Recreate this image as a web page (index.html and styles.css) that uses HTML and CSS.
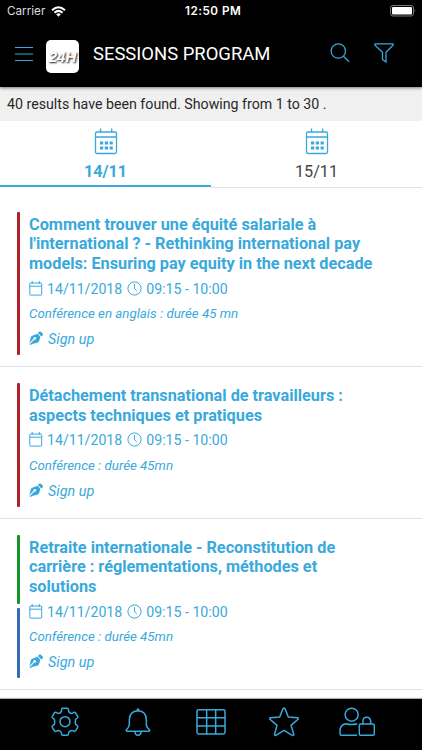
FILE: index.html
```html
<!DOCTYPE html>
<html lang="fr">
  <head>
    <meta charset="utf-8" />
    <title>Sessions program</title>
    <link rel="stylesheet" href="styles.css">
  </head>
  <body>
    <svg class="defs" width="0" height="0">
      <symbol id="calendar" viewBox="0 0 24 27">
        <path d="M6.500 .5v4M17.700 .5v4M3 4h18q1.500 0 1.500 1.500v18.500q0 1.500-1.500 1.500H3q-1.500 0-1.500-1.500V5.500q0-1.500 1.500-1.500zM1.500 9H22.500" />
        <path class="dots" d="M6 13.500h3.200v3H6zM10.800 13.500h3.200v3h-3.200zM15.600 13.500h3.200v3h-3.200zM6 18.500h3.200v3H6zM10.800 18.500h3.200v3h-3.200zM15.600 18.500h3.200v3h-3.200z" />
      </symbol>
      <symbol id="date" viewBox="0 0 14 15">
        <path d="M1.500 2h10.500q.7 0 .7.700v10.700q0 .7-.7.700H1.500q-.7 0-.7-.7V2.700q0-.7.7-.7zM.8 5.200h12M3.200 0v3M10.300 0v3" />
      </symbol>
      <symbol id="clock" viewBox="0 0 15 15">
        <circle cx="7.500" cy="7.500" r="6.600" />
        <path d="M7.500 3.300v4.500l2.200 1.900" />
      </symbol>
      <symbol id="pen" viewBox="0 0 44 44">
        <path d="M2 42L17 27A4 4 0 1 0 14 24L0 39Q4 31 5 22Q5 17 10 15L27 9L36 19L31 33Q29 37 23 38Q12 39 4 44z" />
        <path d="M28 6L32 2Q34 0 37 2L43 8Q45 11 43 13L39 17z" />
      </symbol>
    </svg>

    <header>
      <div class="status">
        <span class="carrier">Carrier</span>
        <svg class="wifi" width="15" height="11" viewBox="0 0 15 11">
          <path d="M1 4.300Q7.500-1.800 14 4.300M3.400 6.800Q7.500 3 11.600 6.800" />
          <path class="fill" d="M5.200 8.300Q7.500 6.400 9.800 8.300L7.500 10.800z" />
        </svg>
        <span class="clock">12:50 PM</span>
        <svg class="battery" width="27" height="12" viewBox="0 0 27 12">
          <rect class="case" x=".5" y=".5" width="23" height="10.500" rx="2.500" />
          <rect class="level" x="2" y="2" width="20" height="7.500" rx="1" />
          <path class="cap" d="M24.700 4q1.500 1.800 0 3.600z" />
        </svg>
      </div>
      <div class="toolbar">
        <svg class="menu" width="18" height="16" viewBox="0 0 18 16">
          <path d="M0 1.500h18M0 8h18M0 14.500h18" />
        </svg>
        <div class="logo"><span>24H</span></div>
        <h1>SESSIONS PROGRAM</h1>
        <svg class="search" width="20" height="20" viewBox="0 0 20 20">
          <circle cx="8.300" cy="8" r="7.200" />
          <path d="M13.500 13.300L19 18.700" />
        </svg>
        <svg class="filter" width="20" height="20" viewBox="0 0 20 20">
          <path d="M1 .8h18v1.400L12 9.200V19L8.500 16.500V9.200L1 2.200z" />
        </svg>
      </div>
    </header>

    <p class="results">40 results have been found. Showing from 1 to 30 .</p>

    <nav class="tabs">
      <a class="tab active"><svg width="24" height="27"><use href="#calendar" /></svg><span>14/11</span></a>
      <a class="tab"><svg width="24" height="27"><use href="#calendar" /></svg><span>15/11</span></a>
    </nav>

    <main>
      <article class="session first">
        <div class="tracks"><i class="red"></i></div>
        <div class="content">
          <h2>Comment trouver une équité salariale à<br>l'international ? - Rethinking international pay<br>models: Ensuring pay equity in the next decade</h2>
          <p class="time">
            <svg width="14" height="15"><use href="#date" /></svg><span class="day">14/11/2018</span>
            <svg width="15" height="15"><use href="#clock" /></svg><span class="hours">09:15 - 10:00</span>
          </p>
          <p class="type">Conférence en anglais : durée 45 mn</p>
          <p class="signup"><svg width="14" height="14"><use href="#pen" /></svg><span>Sign up</span></p>
        </div>
      </article>
      <article class="session">
        <div class="tracks"><i class="red"></i></div>
        <div class="content">
          <h2>Détachement transnational de travailleurs :<br>aspects techniques et pratiques</h2>
          <p class="time">
            <svg width="14" height="15"><use href="#date" /></svg><span class="day">14/11/2018</span>
            <svg width="15" height="15"><use href="#clock" /></svg><span class="hours">09:15 - 10:00</span>
          </p>
          <p class="type">Conférence : durée 45mn</p>
          <p class="signup"><svg width="14" height="14"><use href="#pen" /></svg><span>Sign up</span></p>
        </div>
      </article>
      <article class="session">
        <div class="tracks"><i class="green"></i><i class="blue"></i></div>
        <div class="content">
          <h2>Retraite internationale - Reconstitution de<br>carrière : réglementations, méthodes et<br>solutions</h2>
          <p class="time">
            <svg width="14" height="15"><use href="#date" /></svg><span class="day">14/11/2018</span>
            <svg width="15" height="15"><use href="#clock" /></svg><span class="hours">09:15 - 10:00</span>
          </p>
          <p class="type">Conférence : durée 45mn</p>
          <p class="signup"><svg width="14" height="14"><use href="#pen" /></svg><span>Sign up</span></p>
        </div>
      </article>
    </main>

    <footer>
      <a><svg width="30" height="30" viewBox="150 66 90 90">
        <path d="M188 70h14q3 0 3 3l1 6q1 3 4 5l3 1q3 1 5-1l4-2q3-1 5 2l6 10q2 3-1 5l-4 3q-2 2-2 5v7q0 3 2 5l4 3q3 2 1 5l-6 10q-2 3-5 2l-4-2q-2-1-5 0l-3 2q-3 1-4 4l-1 5q0 3-3 3h-14q-3 0-3-3l-1-5q-1-3-4-5l-3-1q-3-1-5 0l-4 2q-3 1-5-2l-6-10q-2-3 1-5l4-3q2-2 2-5v-7q0-3-2-5l-4-3q-3-2-1-5l6-10q2-3 5-2l4 2q2 2 5 1l3-1q3-2 4-5l1-6q0-3 3-3z" />
        <circle cx="195" cy="110" r="15" />
      </svg></a>
      <a><svg width="30" height="30" viewBox="369 66 90 90">
        <path d="M383 139q-5 0-4-4 9-8 9-17V105Q388 78 414 77Q439 78 439 105v13q0 9 10 17 1 4-4 4zM405 141q1 10 9 10t9-10" />
        <path class="knob" d="M410 77v-5q4-5 8 0v5z" />
      </svg></a>
      <a><svg width="30" height="30" viewBox="588 66 90 90">
        <path d="M596 74h74q5 0 5 5v63q0 5-5 5h-74q-5 0-5-5V79q0-5 5-5zM591 98h84M591 123h84M620 74v73M647 74v73" />
      </svg></a>
      <a><svg width="30" height="30" viewBox="175 66 90 90">
        <path d="M217 71q3-4 6 0l10 25 27 2q5 1 2 5l-21 18 8 26q1 6-4 4l-25-15-24 15q-5 2-4-4l7-26-21-18q-3-4 2-5l27-2z" />
      </svg></a>
      <a><svg width="36" height="30" viewBox="389 66 108 90">
        <circle cx="427" cy="89" r="19.500" />
        <path d="M443 151h-47q-4 0-4-4v-9q0-20 18-22 17 5 34 0M454 117h36q5 0 5 5v24q0 5-5 5h-36q-4 0-4-5v-24q0-5 4-5zM461 117v-8q0-12 11-12t12 12v8" />
      </svg></a>
    </footer>
  </body>
</html>
```

FILE: styles.css
```css
* {
  box-sizing: border-box;
}

body {
  margin: 0;
  height: 750px;
  overflow: hidden;
  display: flex;
  flex-direction: column;
  background: #ffffff;
  color: #39a9dc;
  font-family: Roboto, "Liberation Sans", sans-serif;
}

h1,
h2,
p {
  margin: 0;
  font-weight: 400;
  white-space: nowrap;
}

svg {
  display: block;
  flex: none;
  fill: none;
  stroke: #39a9dc;
  stroke-width: 1.3;
}

.defs {
  position: absolute;
}

header {
  height: 87px;
  flex: none;
  background: #000000;
  color: #ffffff;
  box-shadow: 0 1px 3px rgba(0, 0, 0, 0.5);
  z-index: 1;
}

.status {
  height: 22px;
  display: grid;
  grid-template-columns: 44px 134px 80px 1fr 27px;
  align-items: center;
  padding: 0 5px 0 7px;
  font-family: Inter, sans-serif;
  font-size: 11.7px;
}

.carrier {
  color: #dddddd;
}

.wifi {
  stroke: #ffffff;
  stroke-width: 2;
}

.wifi .fill {
  fill: #ffffff;
  stroke: none;
}

.status .clock {
  font-weight: 600;
  letter-spacing: 0.5px;
  white-space: nowrap;
}

.battery {
  grid-column: 5;
}

.battery .case {
  stroke: #777777;
  stroke-width: 1;
}

.battery .level {
  fill: #ffffff;
  stroke: none;
}

.battery .cap {
  fill: #777777;
  stroke: none;
}

.toolbar {
  display: flex;
  align-items: center;
  height: 63px;
  padding: 0 28px 0 15px;
}

.menu {
  stroke-width: 1;
}

.logo {
  width: 33px;
  height: 33px;
  margin: 5px 14px 0 13px;
  border-radius: 5px;
  background: #ffffff;
  display: flex;
  align-items: center;
  justify-content: center;
  overflow: hidden;
}

.logo span {
  font: italic 700 15px "Liberation Sans", sans-serif;
  color: #ffffff;
  text-shadow: 1px 1px 2px #111111;
}

h1 {
  font-size: 18.45px;
}

.search {
  margin-left: auto;
}

.filter {
  margin-left: 24px;
}

.search,
.filter {
  margin-bottom: 2px;
}

.results {
  height: 34px;
  flex: none;
  padding-left: 7px;
  background: #f0f0f0;
  color: #292929;
  font-size: 14.2px;
  line-height: 35px;
}

.tabs {
  display: flex;
  flex: none;
  height: 67px;
}

.tab {
  flex: 1;
  display: flex;
  flex-direction: column;
  align-items: center;
  padding-top: 7px;
  border-bottom: 1px solid #e2e2e2;
  color: #444444;
  font-size: 16.2px;
  line-height: 34px;
}

.tab span {
  height: 30px;
}

.tab.active {
  border-bottom: 2px solid #39a9dc;
  height: 66px;
  color: #39a9dc;
  font-weight: 700;
}

.dots {
  fill: #39a9dc;
  stroke: none;
}

main {
  flex: 1;
  min-height: 0;
}

.session {
  display: flex;
  padding: 16px 16px 11px;
  border-bottom: 1px solid #e2e2e2;
}

.session.first {
  padding-top: 23.6px;
}

.tracks {
  width: 4px;
  margin-right: 9px;
  display: flex;
  flex-direction: column;
  gap: 4px;
}

.tracks i {
  flex: 1;
  width: 3px;
  margin-left: 1px;
  border-radius: 1px;
}

.red {
  background: #ab2328;
}

.green {
  background: #16942a;
}

.blue {
  background: #356bb3;
}

h2 {
  padding-top: 3.3px;
  font-size: 16.25px;
  font-weight: 700;
  line-height: 19.4px;
}

.time {
  display: flex;
  align-items: center;
  height: 31px;
  font-size: 14.15px;
}

.time svg {
  stroke-width: 1;
  margin-bottom: 1px;
}

.day {
  margin: 0 5px 0 4px;
}

.hours {
  margin-left: 4px;
}

.type {
  font-size: 13.3px;
  font-style: italic;
  line-height: 20px;
}

.signup {
  display: flex;
  align-items: center;
  gap: 5px;
  height: 30.7px;
  font-size: 14.4px;
  font-style: italic;
}

.signup svg {
  margin-bottom: 2px;
  fill: #39a9dc;
  stroke: none;
}

footer {
  height: 51px;
  flex: none;
  display: flex;
  justify-content: center;
  padding-top: 8px;
  background: #000000;
  box-shadow: 0 -1px 1px rgba(0, 0, 0, 0.3);
  z-index: 1;
}

footer a {
  width: 73.2px;
  display: flex;
  justify-content: center;
}

footer svg {
  stroke-width: 4.5;
}

.knob {
  fill: #39a9dc;
  stroke: none;
}
```
